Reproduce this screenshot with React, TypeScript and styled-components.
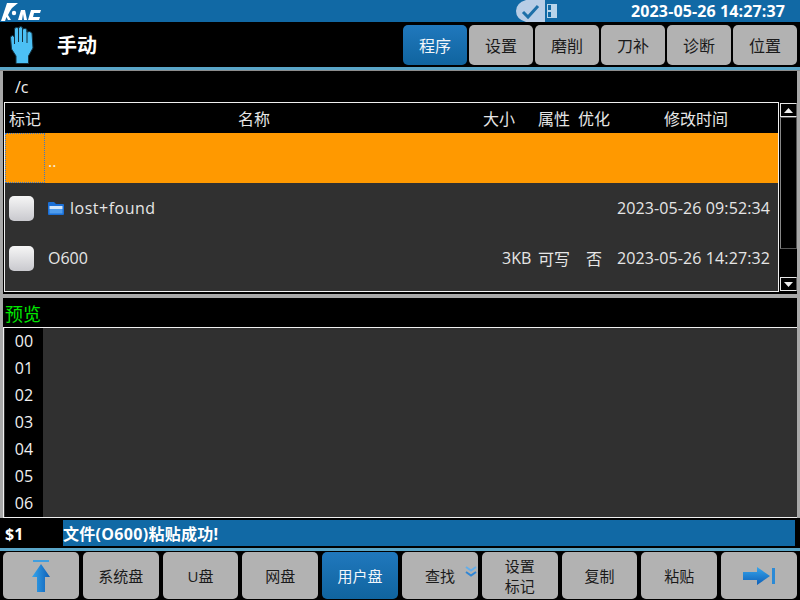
import { FC } from 'react';
import styled, { createGlobalStyle } from 'styled-components';

const tabs = ['程序', '设置', '磨削', '刀补', '诊断', '位置'];
const gutterLines = ['00', '01', '02', '03', '04', '05', '06'];

export default function App() {
    return (
        <Screen>
            <GlobalStyle />
            <TopBar>
                <Logo />
                <StatusIcons>
                    <CheckBadge />
                    <SdIcon />
                </StatusIcons>
                <Clock>2023-05-26 14:27:37</Clock>
            </TopBar>
            <ModeBar>
                <HandIcon />
                <ModeTitle>手动</ModeTitle>
                <Tabs>
                    {tabs.map((t, i) => (
                        <Tab key={t} $active={i === 0}>
                            {t}
                        </Tab>
                    ))}
                </Tabs>
            </ModeBar>
            <AccentLine />
            <Main>
                <PathRow>/c</PathRow>
                <FilePane>
                    <FileTable>
                        <HeaderRow>
                            <MarkCell>标记</MarkCell>
                            <NameHead>名称</NameHead>
                            <SizeHead>大小</SizeHead>
                            <AttrCell>属性</AttrCell>
                            <OptCell>优化</OptCell>
                            <TimeHead>修改时间</TimeHead>
                        </HeaderRow>
                        <ParentRow>
                            <FocusCell />
                            <DotDot>..</DotDot>
                        </ParentRow>
                        <FileRow>
                            <MarkCell>
                                <CheckBox />
                            </MarkCell>
                            <NameCell>
                                <FolderIcon />
                                <FolderName>lost+found</FolderName>
                            </NameCell>
                            <SizeCell />
                            <AttrCell />
                            <OptCell />
                            <TimeCell>2023-05-26 09:52:34</TimeCell>
                        </FileRow>
                        <FileRow>
                            <MarkCell>
                                <CheckBox />
                            </MarkCell>
                            <NameCell>O600</NameCell>
                            <SizeCell>3KB</SizeCell>
                            <AttrCell>可写</AttrCell>
                            <OptCell>否</OptCell>
                            <TimeCell>2023-05-26 14:27:32</TimeCell>
                        </FileRow>
                        <TableRest />
                    </FileTable>
                    <ScrollBar>
                        <ScrollButton>
                            <Triangle viewBox="0 0 9 5">
                                <path d="M4.5 0L9 5H0z" />
                            </Triangle>
                        </ScrollButton>
                        <ScrollTrack />
                        <ScrollThumbGap />
                        <ScrollButton>
                            <Triangle viewBox="0 0 9 5">
                                <path d="M0 0H9L4.5 5z" />
                            </Triangle>
                        </ScrollButton>
                    </ScrollBar>
                </FilePane>
                <Divider />
                <PreviewTitle>预览</PreviewTitle>
                <Editor>
                    <Gutter>
                        {gutterLines.map((n) => (
                            <GutterLine key={n}>{n}</GutterLine>
                        ))}
                    </Gutter>
                </Editor>
            </Main>
            <MessageRow>
                <Channel>$1</Channel>
                <Message>文件(O600)粘贴成功!</Message>
            </MessageRow>
            <AccentLine />
            <SoftKeys>
                <SoftKey>
                    <ArrowTopIcon />
                </SoftKey>
                <SoftKey>系统盘</SoftKey>
                <SoftKey>U盘</SoftKey>
                <SoftKey>网盘</SoftKey>
                <SoftKey $active>用户盘</SoftKey>
                <SoftKey>
                    查找
                    <MoreIcon />
                </SoftKey>
                <SoftKey>
                    设置
                    <br />
                    标记
                </SoftKey>
                <SoftKey>复制</SoftKey>
                <SoftKey>粘贴</SoftKey>
                <SoftKey>
                    <ArrowEndIcon />
                </SoftKey>
            </SoftKeys>
        </Screen>
    );
}

const Logo: FC = () => (
    <LogoSvg viewBox="0 0 42 22">
        <path fill="#fff" d="M1 21L7 3H18L12 8L10 11L8 15L11 20H8L6.5 17L5 21z" />
        <circle cx="14" cy="13" r="2.2" fill="#fff" />
        <path fill="#fff" d="M18 20L21 10H25L27 20H24L23 14L22 20z" />
        <path fill="#fff" d="M41 10H31L28 20H39L40 17H33L34 13H40z" />
    </LogoSvg>
);

const CheckBadge: FC = () => (
    <BadgeSvg viewBox="0 0 29 22">
        <path fill="#b8cde6" d="M29 0H10Q0 3 0 11T10 22H29z" />
        <path fill="none" stroke="#1d6fa8" strokeWidth="3" d="M7 12L12 17L22 6" />
    </BadgeSvg>
);

const SdIcon: FC = () => (
    <SdSvg viewBox="0 0 10 14">
        <rect width="10" height="14" fill="#b8d4ea" />
        <rect x="1" y="1" width="3" height="5" fill="#1169a5" />
        <rect x="1" y="8" width="3" height="5" fill="#1169a5" />
    </SdSvg>
);

const HandIcon: FC = () => (
    <HandSvg viewBox="0 0 24 38">
        <path
            fill="#4cc0f5"
            stroke="#13303f"
            strokeWidth="1"
            d="M6 37.5V30L1.5 23L.5 11Q2.5 8 4.5 11V2.5Q6.5 .5 8.5 2Q10.5 -.5 12.5 1.5L13 3Q15 1.5 17 3.5V6Q20 4.5 22 7L23 22L18.5 30V37.5z"
        />
        <path fill="none" stroke="#13303f" strokeWidth="1" d="M8.5 2V16M12.5 2V16M17 4V17M4.5 11V18" />
    </HandSvg>
);

const FolderIcon: FC = () => (
    <FolderSvg viewBox="0 0 16 14">
        <path fill="#1a6fd6" d="M0 2Q0 1 1 1H6L8 3H15Q16 3 16 4V13Q16 14 15 14H1Q0 14 0 13z" />
        <rect x="1.5" y="5" width="13" height="3" fill="#d3e6fa" />
        <rect x="1.5" y="8" width="13" height="4.5" fill="#4f9cec" />
    </FolderSvg>
);

const ArrowTopIcon: FC = () => (
    <ArrowTopSvg viewBox="0 0 18 32">
        <defs>
            <linearGradient id="arrowUp" x1="0" x2="1" y1="0" y2="0">
                <stop offset="0" stopColor="#37a6ec" />
                <stop offset="1" stopColor="#0d5fb8" />
            </linearGradient>
        </defs>
        <rect x="1" y="0" width="16" height="2" fill="#3f9ee0" />
        <path fill="url(#arrowUp)" d="M9 4L18 17H13V32H5V17H0z" />
    </ArrowTopSvg>
);

const ArrowEndIcon: FC = () => (
    <ArrowEndSvg viewBox="0 0 32 18">
        <defs>
            <linearGradient id="arrowEnd" x1="0" x2="0" y1="0" y2="1">
                <stop offset="0" stopColor="#37a6ec" />
                <stop offset="1" stopColor="#0d5fb8" />
            </linearGradient>
        </defs>
        <path fill="url(#arrowEnd)" d="M0 5H14V0L27 9L14 18V13H0z" />
        <rect x="29" y="1" width="3" height="16" fill="#2b8ad6" />
    </ArrowEndSvg>
);

const MoreIcon: FC = () => (
    <MoreSvg viewBox="0 0 12 11">
        <path fill="none" stroke="#63aeea" strokeWidth="2" d="M1 1L6 4.5L11 1" />
        <path fill="none" stroke="#2f86d6" strokeWidth="2" d="M1 6L6 9.5L11 6" />
    </MoreSvg>
);

const GlobalStyle = createGlobalStyle`
    html, body {
        margin: 0;
        padding: 0;
        background: #000;
    }
    body {
        font-family: 'Open Sans', 'Noto Sans CJK SC', sans-serif;
    }
`;

const Screen = styled.div`
    width: 800px;
    height: 600px;
    display: flex;
    flex-direction: column;
    overflow: hidden;
    background: #000;
    color: #e8e8e8;
`;
const TopBar = styled.div`
    height: 22px;
    display: flex;
    align-items: center;
    background: #1169a5;
`;
const LogoSvg = styled.svg`
    width: 42px;
    height: 22px;
`;
const StatusIcons = styled.div`
    display: flex;
    align-items: center;
    margin-left: 474px;
    gap: 2px;
`;
const BadgeSvg = styled.svg`
    width: 29px;
    height: 22px;
`;
const SdSvg = styled.svg`
    width: 10px;
    height: 14px;
`;
const Clock = styled.div`
    margin-left: auto;
    margin-right: 15px;
    font-size: 16px;
    letter-spacing: 0.12px;
    font-weight: 700;
    color: #fff;
    white-space: nowrap;
`;
const ModeBar = styled.div`
    height: 45px;
    display: flex;
    align-items: center;
    padding-left: 10px;
`;
const HandSvg = styled.svg`
    width: 24px;
    height: 38px;
`;
const ModeTitle = styled.div`
    margin-left: 23px;
    font-size: 20px;
    font-weight: 700;
    color: #fff;
`;
const Tabs = styled.div`
    margin-left: auto;
    margin-right: 3px;
    display: flex;
    gap: 2px;
`;
const Tab = styled.div<{ $active?: boolean }>`
    width: 64px;
    height: 40px;
    display: flex;
    align-items: center;
    justify-content: center;
    border-radius: 5px;
    font-size: 16px;
    color: ${({ $active }) => ($active ? '#f2f6fa' : '#1a1a1a')};
    background: ${({ $active }) =>
        $active ? 'linear-gradient(#2078bd, #10649f)' : '#b2b2b2'};
`;
const AccentLine = styled.div`
    height: 3px;
    flex: none;
    background: #5aa6c8;
`;
const Main = styled.div`
    height: 448px;
    flex: none;
    box-sizing: border-box;
    display: flex;
    flex-direction: column;
    padding: 0 3px 2px;
    border-top: 1px solid #8c8c8c;
    background: #000;
    box-shadow: inset 3px 0 0 #a8a8a8, inset -3px 0 0 #a8a8a8;
`;
const PathRow = styled.div`
    height: 31px;
    flex: none;
    padding-left: 12px;
    display: flex;
    align-items: center;
    font-size: 16px;
    color: #f0f0f0;
`;
const FilePane = styled.div`
    height: 190px;
    flex: none;
    display: flex;
    padding-left: 1px;
`;
const FileTable = styled.div`
    width: 776px;
    box-sizing: border-box;
    border: 1px solid #f0f0f0;
    display: flex;
    flex-direction: column;
    font-size: 16px;
    color: #e6e6e6;
`;
const HeaderRow = styled.div`
    height: 30px;
    flex: none;
    display: flex;
    align-items: center;
    background: #000;
    white-space: nowrap;
`;
const FileRow = styled.div`
    height: 50px;
    flex: none;
    display: flex;
    align-items: center;
    background: #303030;
    white-space: nowrap;
`;
const ParentRow = styled.div`
    height: 50px;
    flex: none;
    display: flex;
    background: #ff9900;
`;
const FocusCell = styled.div`
    width: 40px;
    box-sizing: border-box;
    border: 1px dotted #3a78c8;
`;
const DotDot = styled.div`
    padding: 17px 0 0 3px;
    font-size: 16px;
    color: #f5f0e0;
`;
const TableRest = styled.div`
    flex: 1;
    background: #303030;
`;
const MarkCell = styled.div`
    width: 43px;
    flex: none;
    padding-left: 4px;
    box-sizing: border-box;
    display: flex;
    align-items: center;
`;
const NameHead = styled.div`
    width: 412px;
    flex: none;
    text-align: center;
`;
const NameCell = styled.div`
    width: 412px;
    flex: none;
    display: flex;
    align-items: center;
    gap: 6px;
`;
const FolderName = styled.span`
    letter-spacing: 0.5px;
`;
const SizeHead = styled.div`
    width: 60px;
    flex: none;
    margin-left: -2px;
    padding-left: 25px;
    box-sizing: border-box;
`;
const SizeCell = styled.div`
    width: 58px;
    flex: none;
    padding-left: 42px;
    box-sizing: border-box;
    white-space: nowrap;
`;
const AttrCell = styled.div`
    width: 40px;
    flex: none;
    margin-left: 20px;
`;
const OptCell = styled.div`
    width: 32px;
    flex: none;
    text-align: center;
`;
const TimeHead = styled.div`
    flex: 1;
    padding-left: 54px;
`;
const TimeCell = styled.div`
    flex: 1;
    padding-left: 7px;
    letter-spacing: 0.11px;
`;
const CheckBox = styled.div`
    width: 25px;
    height: 25px;
    border-radius: 5px;
    background: linear-gradient(#f6f6f6, #c9c9ce);
`;
const FolderSvg = styled.svg`
    width: 16px;
    height: 14px;
`;
const ScrollBar = styled.div`
    width: 17px;
    margin-left: 1px;
    padding: 1px 0;
    display: flex;
    flex-direction: column;
`;
const ScrollButton = styled.div`
    height: 14px;
    flex: none;
    box-sizing: border-box;
    border: 1px solid #e8e8e8;
    border-right-color: #555;
    display: flex;
    align-items: center;
    justify-content: center;
    background: #000;
`;
const Triangle = styled.svg`
    width: 9px;
    height: 5px;
    fill: #f0f0f0;
`;
const ScrollTrack = styled.div`
    height: 132px;
    flex: none;
    box-sizing: border-box;
    border: 1px solid #555;
    border-left-color: #888;
    background: #000;
`;
const ScrollThumbGap = styled.div`
    flex: 1;
`;
const Divider = styled.div`
    height: 4px;
    flex: none;
    margin-top: 2px;
    background: #a8a8a8;
`;
const PreviewTitle = styled.div`
    height: 29px;
    flex: none;
    padding-left: 2px;
    display: flex;
    align-items: center;
    font-size: 18px;
    color: #00e600;
`;
const Editor = styled.div`
    height: 191px;
    flex: none;
    box-sizing: border-box;
    border-top: 1px solid #f0f0f0;
    border-bottom: 1px solid #f0f0f0;
    border-left: 1px solid #f0f0f0;
    padding-left: 1px;
    display: flex;
    background: #303030;
`;
const Gutter = styled.div`
    width: 38px;
    background: #000;
    display: flex;
    flex-direction: column;
`;
const GutterLine = styled.div`
    height: 27px;
    flex: none;
    box-sizing: border-box;
    padding-bottom: 2px;
    display: flex;
    align-items: center;
    justify-content: center;
    font-size: 16px;
    color: #f0f0f0;
`;
const MessageRow = styled.div`
    height: 30px;
    flex: none;
    box-sizing: border-box;
    padding: 2px 5px 0 5px;
    display: flex;
    background: #000;
`;
const Channel = styled.div`
    width: 58px;
    flex: none;
    display: flex;
    align-items: center;
    font-size: 16px;
    font-weight: 700;
    color: #fff;
`;
const Message = styled.div`
    flex: 1;
    height: 26px;
    display: flex;
    align-items: center;
    background: #1169a5;
    font-size: 16px;
    letter-spacing: 0.3px;
    font-weight: 700;
    color: #fff;
`;
const SoftKeys = styled.div`
    flex: 1;
    padding: 1px 3px 1px;
    display: flex;
    gap: 4px;
`;
const SoftKey = styled.div<{ $active?: boolean }>`
    flex: 1;
    position: relative;
    display: flex;
    align-items: center;
    justify-content: center;
    text-align: center;
    line-height: 20px;
    border-radius: 5px;
    font-size: 15px;
    color: ${({ $active }) => ($active ? '#f2f6fa' : '#1a1a1a')};
    background: ${({ $active }) =>
        $active ? 'linear-gradient(#2078bd, #10649f)' : '#b2b2b2'};
`;
const ArrowTopSvg = styled.svg`
    width: 18px;
    height: 32px;
`;
const ArrowEndSvg = styled.svg`
    width: 32px;
    height: 18px;
`;
const MoreSvg = styled.svg`
    position: absolute;
    right: 1px;
    top: 14px;
    width: 12px;
    height: 11px;
`;
